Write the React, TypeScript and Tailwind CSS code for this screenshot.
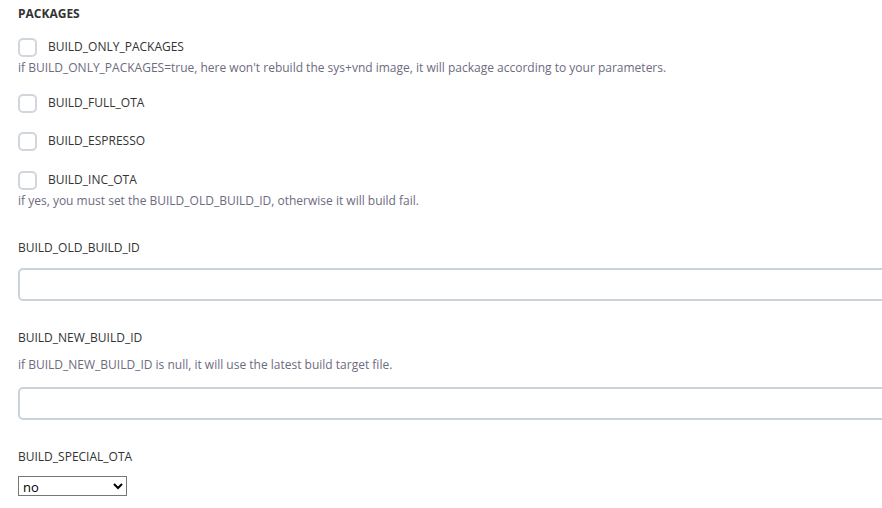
import React from "react";

interface CheckRowProps {
  label: string;
  className?: string;
}

function CheckRow({ label, className = "" }: CheckRowProps) {
  return (
    <label className={`flex items-center h-5 ${className}`}>
      <span className="w-[19px] h-[19px] rounded-[5px] border-2 border-[#d0d6db] bg-white shrink-0" />
      <span className="ml-[11px] text-[12px] leading-5 text-[#333]">{label}</span>
    </label>
  );
}

function Desc({ children, className = "" }: { children: React.ReactNode; className?: string }) {
  return <div className={`text-[12px] leading-4 text-[#6d6b80] ${className}`}>{children}</div>;
}

function FieldLabel({ children, className = "" }: { children: React.ReactNode; className?: string }) {
  return <div className={`text-[12px] leading-[18px] text-[#333] ${className}`}>{children}</div>;
}

export default function App() {
  return (
    <div
      className="w-[882px] h-[508px] overflow-hidden bg-white pl-[18px] pt-[5px]"
      style={{ fontFamily: '"Open Sans", "Noto Sans", sans-serif' }}
    >
      <div className="text-[12px] leading-[18px] font-bold text-[#333]">PACKAGES</div>

      <CheckRow label="BUILD_ONLY_PACKAGES" className="mt-[14px]" />
      <Desc className="mt-[3px]">
        if BUILD_ONLY_PACKAGES=true, here won't rebuild the sys+vnd image, it will package according to your parameters.
      </Desc>

      <CheckRow label="BUILD_FULL_OTA" className="mt-[17px]" />
      <CheckRow label="BUILD_ESPRESSO" className="mt-[18px]" />
      <CheckRow label="BUILD_INC_OTA" className="mt-[19px]" />
      <Desc className="mt-[3px]">if yes, you must set the BUILD_OLD_BUILD_ID, otherwise it will build fail.</Desc>

      <FieldLabel className="mt-[30px]">BUILD_OLD_BUILD_ID</FieldLabel>
      <input
        type="text"
        className="block mt-[11px] w-[900px] h-[33px] rounded-[5px] border-2 border-[#ccd3d8] bg-white px-2 text-[12px] outline-none"
      />

      <FieldLabel className="mt-[28px]">BUILD_NEW_BUILD_ID</FieldLabel>
      <Desc className="mt-[10px]">if BUILD_NEW_BUILD_ID is null, it will use the latest build target file.</Desc>
      <input
        type="text"
        className="block mt-[14px] w-[900px] h-[33px] rounded-[5px] border-2 border-[#ccd3d8] bg-white px-2 text-[12px] outline-none"
      />

      <FieldLabel className="mt-[28px]">BUILD_SPECIAL_OTA</FieldLabel>
      <select
        defaultValue="no"
        className="block mt-[10px] w-[109px] h-[20px] border border-[#767676] rounded-none bg-white text-[13px] text-black"
        style={{ fontFamily: '"Open Sans", "Noto Sans", sans-serif' }}
      >
        <option value="no">no</option>
        <option value="yes">yes</option>
      </select>
    </div>
  );
}
